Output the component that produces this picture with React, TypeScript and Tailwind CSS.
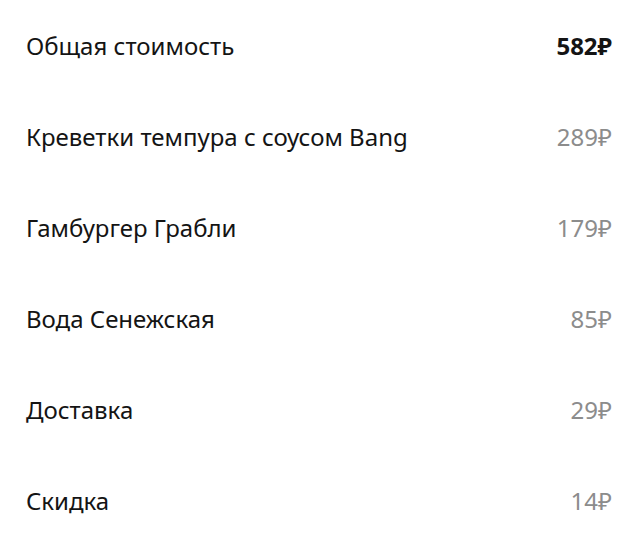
import React from "react";

const items = [
  { name: "Креветки темпура с соусом Bang", price: 289 },
  { name: "Гамбургер Грабли", price: 179 },
  { name: "Вода Сенежская", price: 85 },
  { name: "Доставка", price: 29 },
  { name: "Скидка", price: 14 },
];

export default function App() {
  return (
    <div className="w-[640px] h-[546px] bg-white font-['Noto_Sans',sans-serif] text-[24px] text-[#141414]">
      <div className="flex items-center justify-between h-[91px] pl-[26px] pr-[28px]">
        <span>Общая стоимость</span>
        <span className="font-bold">582₽</span>
      </div>
      {items.map((it) => (
        <div
          key={it.name}
          className="flex items-center justify-between h-[91px] pl-[26px] pr-[28px]"
        >
          <span>{it.name}</span>
          <span className="text-[#8c8c8c]">{it.price}₽</span>
        </div>
      ))}
    </div>
  );
}
